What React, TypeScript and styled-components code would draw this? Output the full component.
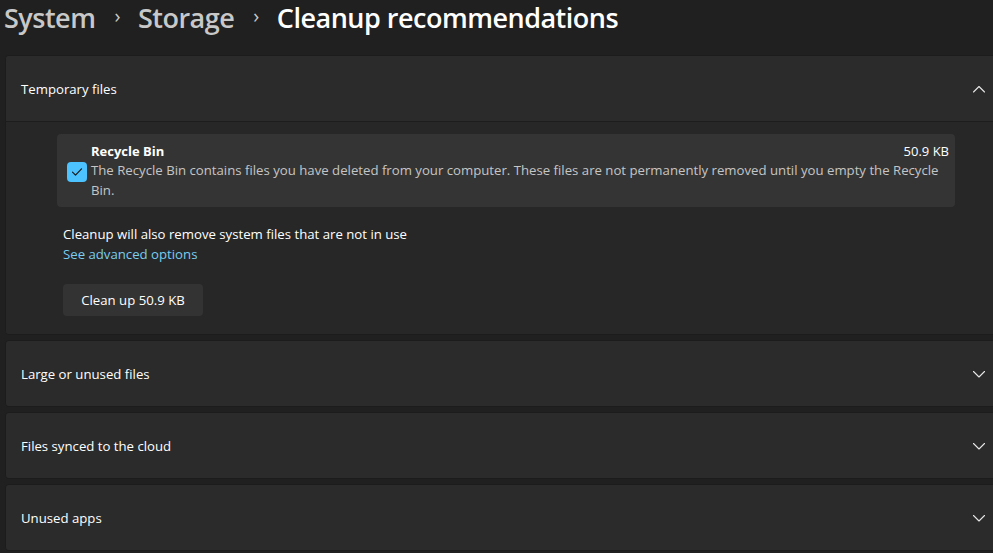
import React from "react";
import styled, { createGlobalStyle } from "styled-components";

const Global = createGlobalStyle`
  html, body { margin: 0; padding: 0; background: #202020; }
  body { font-family: "Open Sans", "Noto Sans", sans-serif; color: #ffffff; }
  * { box-sizing: border-box; }
`;

const Page = styled.div`
  width: 993px;
  height: 553px;
  overflow: hidden;
  background: #202020;
  display: flex;
  flex-direction: column;
`;

const Breadcrumb = styled.div`
  display: flex;
  align-items: center;
  height: 36px;
  padding-left: 4px;
  font-size: 27px;
  font-weight: 600;
  letter-spacing: -0.5px;
  margin-bottom: 20px;
  margin-top: -1px;
`;

const Crumb = styled.span<{ $current?: boolean }>`
  color: ${(p) => (p.$current ? "#ffffff" : "#c8c8c8")};
`;

const Sep = styled.span`
  color: #c8c8c8;
  font-size: 20px;
  font-weight: 400;
  margin: 0 18px 0 19px;
  position: relative;
  top: -2px;
`;

const List = styled.div`
  display: flex;
  flex-direction: column;
  gap: 5px;
  padding-left: 5px;
  margin-right: -10px;
`;

const Card = styled.section`
  background: #2b2b2b;
  border-radius: 4px;
  border: 1px solid #1c1c1c;
  overflow: hidden;
`;

const Header = styled.div<{ $open?: boolean }>`
  height: ${(p) => (p.$open ? "66px" : "65px")};
  display: flex;
  align-items: center;
  justify-content: space-between;
  padding: 0 14px 0 15px;
  color: #ffffff;
  background: #2b2b2b;
  border-bottom: ${(p) => (p.$open ? "1px solid #1d1d1d" : "none")};
`;

const HeaderTitle = styled.span`
  font-size: 13.2px;
`;

const ChevronWrap = styled.span`
  width: 14px;
  height: 14px;
  display: flex;
  align-items: center;
  justify-content: center;
  margin-right: 2px;
`;

const Body = styled.div`
  background: #272727;
  padding: 12px 0 18px 51px;
  display: flex;
  flex-direction: column;
`;

const Item = styled.div`
  width: 898px;
  min-height: 73px;
  background: #343434;
  border-radius: 4px;
  display: flex;
  align-items: center;
  padding: 7px 6px 7px 10px;
  gap: 4px;
`;

const Check = styled.span`
  width: 20px;
  height: 20px;
  flex: none;
  border-radius: 4px;
  background: #4cc2ff;
  display: flex;
  align-items: center;
  justify-content: center;
  margin-top: 2px;
`;

const ItemText = styled.div`
  flex: 1;
  display: flex;
  flex-direction: column;
`;

const ItemTop = styled.div`
  display: flex;
  justify-content: space-between;
  font-size: 13px;
  line-height: 20px;
`;

const ItemName = styled.span`
  font-weight: 700;
  color: #ffffff;
`;

const ItemSize = styled.span`
  color: #ffffff;
`;

const ItemDesc = styled.div`
  font-size: 13.2px;
  line-height: 19.5px;
  color: #c5c5c5;
  padding-right: 0;
`;

const Note = styled.div`
  margin-top: 17px;
  padding-left: 6px;
  font-size: 13.2px;
  line-height: 20px;
  color: #ffffff;
`;

const Link = styled.a`
  padding-left: 6px;
  font-size: 13.2px;
  line-height: 20px;
  color: #78cdf0;
  text-decoration: none;
  width: fit-content;
`;

const Button = styled.button`
  margin-top: 20px;
  margin-left: 6px;
  width: 140px;
  height: 32px;
  border: none;
  border-radius: 4px;
  background: #333333;
  color: #ffffff;
  font-family: inherit;
  font-size: 13.2px;
  padding: 0;
`;

const Chevron = ({ up }: { up?: boolean }) => (
  <svg width="14" height="14" viewBox="0 0 14 14" fill="none">
    <path
      d={up ? "M1.5 10 L7 4.5 L12.5 10" : "M1.5 4.5 L7 10 L12.5 4.5"}
      stroke="#e6e6e6"
      strokeWidth="1.1"
      strokeLinecap="round"
      strokeLinejoin="round"
    />
  </svg>
);

const Collapsed = ({ title }: { title: string }) => (
  <Card>
    <Header>
      <HeaderTitle>{title}</HeaderTitle>
      <ChevronWrap>
        <Chevron />
      </ChevronWrap>
    </Header>
  </Card>
);

export default function App() {
  return (
    <Page>
      <Global />
      <Breadcrumb>
        <Crumb>System</Crumb>
        <Sep>›</Sep>
        <Crumb>Storage</Crumb>
        <Sep>›</Sep>
        <Crumb $current>Cleanup recommendations</Crumb>
      </Breadcrumb>
      <List>
        <Card>
          <Header $open>
            <HeaderTitle>Temporary files</HeaderTitle>
            <ChevronWrap>
              <Chevron up />
            </ChevronWrap>
          </Header>
          <Body>
            <Item>
              <Check>
                <svg width="12" height="12" viewBox="0 0 12 12" fill="none">
                  <path
                    d="M1.5 6.2 L4.5 9.2 L10.5 2.8"
                    stroke="#1a1a1a"
                    strokeWidth="1.2"
                    strokeLinecap="round"
                    strokeLinejoin="round"
                  />
                </svg>
              </Check>
              <ItemText>
                <ItemTop>
                  <ItemName>Recycle Bin</ItemName>
                  <ItemSize>50.9 KB</ItemSize>
                </ItemTop>
                <ItemDesc>
                  The Recycle Bin contains files you have deleted from your computer. These files are not
                  permanently removed until you empty the Recycle Bin.
                </ItemDesc>
              </ItemText>
            </Item>
            <Note>Cleanup will also remove system files that are not in use</Note>
            <Link href="#">See advanced options</Link>
            <Button>Clean up 50.9 KB</Button>
          </Body>
        </Card>
        <Collapsed title="Large or unused files" />
        <Collapsed title="Files synced to the cloud" />
        <Collapsed title="Unused apps" />
      </List>
    </Page>
  );
}
